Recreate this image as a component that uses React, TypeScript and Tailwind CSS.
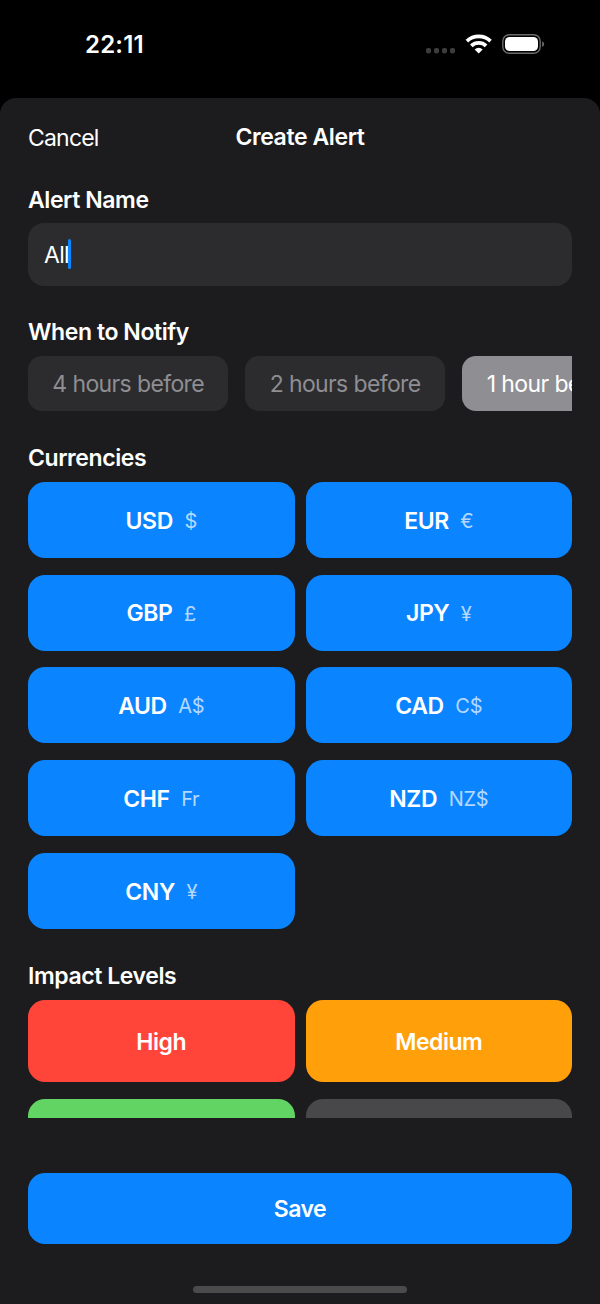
const currencies = [
  { code: "USD", symbol: "$" },
  { code: "EUR", symbol: "€" },
  { code: "GBP", symbol: "£" },
  { code: "JPY", symbol: "¥" },
  { code: "AUD", symbol: "A$" },
  { code: "CAD", symbol: "C$" },
  { code: "CHF", symbol: "Fr" },
  { code: "NZD", symbol: "NZ$" },
  { code: "CNY", symbol: "¥" },
];

function StatusBar() {
  return (
    <div className="h-[98px] shrink-0 flex justify-between pl-[85px] pr-[55px] pt-[30px]">
      <span className="h-[30px] leading-[30px] text-[24px] font-semibold tracking-[0.2px]">
        22:11
      </span>
      <svg className="w-[120px] h-[30px]" viewBox="425 30 120 30">
        <g fill="#3c3d3c">
          <rect x="426" y="48" width="5" height="5.4" rx="1.8" />
          <rect x="434" y="48" width="5" height="5.4" rx="1.8" />
          <rect x="442" y="48" width="5" height="5.4" rx="1.8" />
          <rect x="450" y="48" width="5" height="5.4" rx="1.8" />
        </g>
        <g fill="none" stroke="#fff" strokeWidth="3.7">
          <path d="M466.9 41.1a17.1 17.1 0 0 1 23.6 0" />
          <path d="M471.3 45.8a10.7 10.7 0 0 1 14.8 0" />
        </g>
        <path d="M474.7 49.4a5.8 5.8 0 0 1 8 0l-4 4z" fill="#fff" />
        <rect x="502.8" y="34.7" width="37.4" height="18.6" rx="6.5" fill="none" stroke="#6a6a6a" strokeWidth="1.4" />
        <rect x="505" y="37" width="33" height="14" rx="4.6" fill="#fff" />
        <path d="M542.2 41.2c2.6 1 2.6 4.8 0 5.8z" fill="#6a6a6a" />
      </svg>
    </div>
  );
}

function SectionTitle({ children }: { children: string }) {
  return (
    <h2 className="h-[30px] leading-[30px] text-[23px] font-semibold tracking-[-0.42px]">
      {children}
    </h2>
  );
}

export default function App() {
  return (
    <div className="w-[600px] h-[1304px] flex flex-col overflow-hidden bg-black text-white font-['Inter',sans-serif]">
      <StatusBar />

      <div className="flex-1 min-h-0 flex flex-col rounded-t-[16px] bg-[#1c1c1e] px-7">
        <div className="h-[87px] shrink-0 grid grid-cols-3 pt-6 text-[23px] leading-[30px]">
          <button className="text-left h-[30px] pt-px tracking-[-0.8px]">Cancel</button>
          <h1 className="text-center whitespace-nowrap font-semibold tracking-[-0.4px]">Create Alert</h1>
        </div>

        <div className="h-[932.5px] shrink-0 overflow-hidden">
          <SectionTitle>Alert Name</SectionTitle>
          <div className="mt-2 h-[62.5px] rounded-[16px] bg-[#2c2c2e] flex items-center pl-4">
            <span className="pt-px text-[23px] tracking-[-0.7px]">All</span>
            <span className="-ml-px w-[3px] h-[30px] rounded-full bg-[#0a84ff]" />
          </div>

          <div className="mt-[31px]">
            <SectionTitle>When to Notify</SectionTitle>
          </div>
          <div className="mt-[9.5px] h-[55px] flex gap-[16.5px] overflow-hidden text-[23px] tracking-[-0.62px] whitespace-nowrap">
            <button className="w-[200.4px] shrink-0 rounded-[14px] bg-[#2c2c2e] pt-px text-[#8e8e93]">
              4 hours before
            </button>
            <button className="w-[200.4px] shrink-0 rounded-[14px] bg-[#2c2c2e] pt-px text-[#8e8e93]">
              2 hours before
            </button>
            <button className="w-[190px] shrink-0 rounded-[14px] bg-[#8e8e93] pt-px pl-[25px] text-left">
              1 hour before
            </button>
          </div>

          <div className="mt-8">
            <SectionTitle>Currencies</SectionTitle>
          </div>
          <div className="mt-[9px] grid grid-cols-2 gap-x-[11px] gap-y-[16.6px]">
            {currencies.map((c) => (
              <button
                key={c.code}
                className="h-[76.1px] rounded-[17px] bg-[#0a84ff] flex items-center justify-center gap-[11.5px] pt-0.5"
              >
                <span className="text-[23px] font-semibold tracking-[-0.4px]">{c.code}</span>
                <span className="text-[20px] tracking-[-0.3px] text-white/70">{c.symbol}</span>
              </button>
            ))}
          </div>

          <div className="mt-8">
            <SectionTitle>Impact Levels</SectionTitle>
          </div>
          <div className="mt-[9.5px] grid grid-cols-2 gap-x-[11px] gap-y-[17px] text-[23px] font-semibold tracking-[-0.4px]">
            <button className="h-[81.5px] rounded-[17px] bg-[#ff453a] pt-[3px]">High</button>
            <button className="h-[81.5px] rounded-[17px] bg-[#ff9f0a] pt-[3px] tracking-[-0.5px]">Medium</button>
            <div className="h-[81.5px] rounded-[17px] bg-[#62d463]" />
            <div className="h-[81.5px] rounded-[17px] bg-[#48484a]" />
          </div>
        </div>

        <button className="mt-[55px] h-[71px] shrink-0 rounded-[17px] bg-[#0a84ff] pt-0.5 text-[23px] font-semibold tracking-[-0.5px]">
          Save
        </button>
        <div className="mt-[42.5px] h-[7px] w-[214px] shrink-0 self-center rounded-full bg-[#4b4b4c]" />
      </div>
    </div>
  );
}
